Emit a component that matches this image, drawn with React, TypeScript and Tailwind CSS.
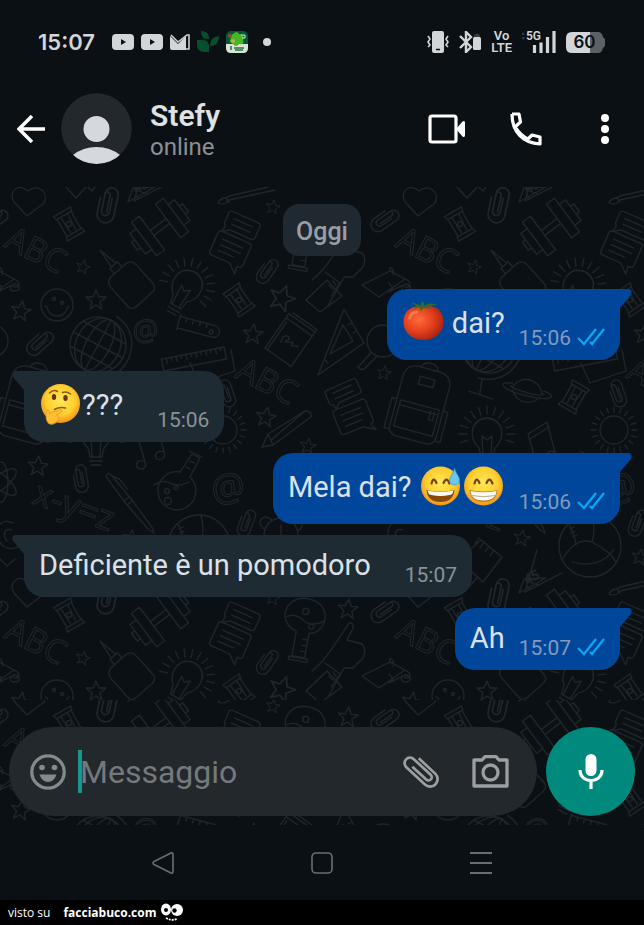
import React from 'react';

const TILE = 391;

type Spot = { x: number; y: number; r?: number; s?: number };

const stars: Spot[] = [
  { x: 273, y: 207, r: 10, s: 0.7 },
  { x: 83, y: 267, r: 15, s: 0.7 },
  { x: 96, y: 300, r: 0, s: 1 },
  { x: 21, y: 311, r: 10, s: 1 },
  { x: 282, y: 298, r: 20, s: 1.3 },
  { x: 253, y: 334, r: 5, s: 1 },
  { x: 384, y: 373, r: 10, s: 0.7 },
  { x: 266, y: 417, r: 10, s: 1 },
  { x: 308, y: 446, r: 10, s: 0.8 },
  { x: 38, y: 466, r: 5, s: 1 },
  { x: 131, y: 538, r: 10, s: 0.8 },
  { x: 249, y: 557, r: 10, s: 0.8 },
  { x: 348, y: 218, r: 5, s: 1 },
];

const clips: Spot[] = [
  { x: 107, y: 204, r: 12, s: 1.3 },
  { x: 267, y: 270, r: 35, s: 1 },
  { x: 385, y: 219, r: 55, s: 1.1 },
  { x: 40, y: 342, r: 48, s: 1.1 },
  { x: 226, y: 393, r: -20, s: 1 },
  { x: 80, y: 478, r: -10, s: 1 },
  { x: 246, y: 522, r: 20, s: 1 },
];

const sharpeners: Spot[] = [
  { x: 69, y: 224, r: -30 },
  { x: 239, y: 300, r: -35 },
  { x: 183, y: 397, r: 30 },
];

const bulbs: Spot[] = [
  { x: 187, y: 286, r: 30 },
  { x: 96, y: 434, r: 0 },
];

const place = (p: Spot) => `translate(${p.x} ${p.y}) rotate(${p.r ?? 0}) scale(${p.s ?? 1})`;

const rays = Array.from({ length: 20 }, (_, i) => i * 18);

const Doodles: React.FC = () => (
  <g fill="none" stroke="#1f2529" strokeWidth={1.3} strokeLinejoin="round" strokeLinecap="round">
    {stars.map((p) => (
      <path key={`${p.x}-${p.y}`} transform={place(p)} d="M0-10L3-3 10-3 4 2 6 9 0 5-6 9-4 2-10-3-3-3Z" />
    ))}
    {clips.map((p) => (
      <path key={`${p.x}-${p.y}`} transform={place(p)} d="M3-5V6a3 3 0 01-6 0V-8a5 5 0 0110 0V8a6 6 0 01-13 0V-4M-3-2V-7a2 2 0 014 0V6" />
    ))}
    {sharpeners.map((p) => (
      <g key={`${p.x}-${p.y}`} transform={place(p)}>
        <path d="M-10-14H10L8-8V8L10 14H-10L-8 8V-8ZM-9-10H9M-9 10H9M-4-9L-3 8M4-9L3 8" />
        <circle r={2.5} />
      </g>
    ))}
    {bulbs.map((p) => (
      <g key={`${p.x}-${p.y}`} transform={place(p)}>
        <path d="M-6 23L-8 14C-18 5-18-14 0-16 18-14 18 5 8 14L6 23ZM-6 27H6M-5 31H5M-4 23L-5 2 0 6 5 2 4 23" />
        {rays.slice(0, 13).map((a) => (
          <path key={a} d="M0-20V-28" transform={`rotate(${a - 108})`} />
        ))}
      </g>
    ))}

    <path d="M27 216L14 202C8 192 18 182 28 191 39 183 49 193 44 203Z" />
    <path d="M66 187L76 198 86 187M128 202L133 188 155 187 128 202M136 195L139 198" />
    <path d="M218 203C220 197 226 199 229 196L268 187M229 200L275 190M226 198L229 202M218 203C223 205 227 203 229 200" />

    <g transform="translate(160 227) rotate(-37)">
      <path d="M-10-3H10M-10 3H10M-20-21H-10V21H-20ZM10-21H20V21H10ZM-28-13H-20V13H-28ZM20-13H28V13H20ZM-32-5H-28V5H-32ZM28-5H32V5H28Z" />
    </g>

    <g transform="translate(241 225) rotate(24)">
      <path d="M-13-9H15Q18-9 18-6V6Q18 9 15 9H-8L-15 14-14 7Q-16 6-16 4V-6Q-16-9-13-9ZM-9-3H11M-9 3H11" />
    </g>
    <g transform="translate(230 250) rotate(24)">
      <path d="M-15-14H15Q18-14 18-11V9Q18 12 15 12H13L14 20 5 12H-15Q-18 12-18 9V-11Q-18-14-15-14ZM-11-7H11M-11-1H11M-11 5H6" />
    </g>
    <g transform="translate(343 392) rotate(-24)">
      <path d="M-15-8H14Q17-8 17-5V5Q17 8 14 8H-8L-13 13-14 8Q-17 7-17 5V-5Q-17-8-15-8ZM-10-3H10M-10 3H10" />
    </g>
    <g transform="translate(353 418) rotate(-22)">
      <path d="M-14-14H15Q18-14 18-11V9Q18 12 15 12H14L17 19 6 12H-14Q-17 12-17 9V-11Q-17-14-14-14ZM-10-7H11M-10-1H11M-10 5H8" />
    </g>

    <g fontFamily="'Open Sans', sans-serif" fontSize={33} strokeWidth={1}>
      <text transform="translate(3 246) rotate(27)">ABC</text>
      <text transform="translate(234 377) rotate(27)">ABC</text>
      <text transform="translate(134 342) rotate(-8)" fontSize={29}>@</text>
      <text transform="translate(214 504) rotate(-12)" fontSize={38}>@</text>
      <text transform="translate(31 503) rotate(20)" fontSize={35}>x-y=z</text>
      <text transform="translate(136 584) rotate(-25)" fontSize={13}>45</text>
    </g>

    <g transform="translate(127 280) rotate(-42)">
      <path d="M-10-13H10Q17-12 17-5V20Q17 26 10 26H-10Q-17 26-17 20V-5Q-17-12-10-13ZM-5-13V-20H5V-13M-3-20L0-40 3-20" />
    </g>

    <g transform="translate(302 236) rotate(10)">
      <path d="M-5 5V30H8V5M-8 31H11V34H-8ZM-5 5C-18 2-23-12-15-22-7-32 13-31 19-20 25-10 19 3 8 5M-18-7Q-9-13 0-7T21-10M3 12H8M3 18H8M3 24H8" />
      <circle cx={1} cy={-16} r={3} />
      <circle cx={9} cy={-2} r={2.5} />
    </g>
    <g transform="translate(172 489)">
      <path d="M8-17L20-35 28-31 18-12M17-38L30-32M18-28L22-26M14-22L18-20M-18-4Q-10-10-2-6T17-7" />
      <path d="M8-17A19 19 0 1018-12" />
      <circle cx={-5} cy={2} r={2.5} />
      <circle cx={4} cy={-1} r={2} />
      <circle cx={-4} cy={12} r={3.5} />
    </g>

    <path d="M-2 283L2 288-2 292M0 291L14 284M14 284C21 285 21 291 15 291 9 291 9 286 14 284" />
    <circle cx={57} cy={305} r={16} />
    <path d="M47 307C49 319 65 319 67 308M47 307L45 306M67 308L69 306" />
    <circle cx={54} cy={299} r={1.5} />
    <circle cx={62} cy={303} r={1.5} />

    <g transform="translate(98 345) rotate(28)">
      <circle r={28} />
      <ellipse rx={12} ry={28} />
      <ellipse rx={22} ry={28} />
      <path d="M0-28V28M-28 0H28M-24-14H24M-24 14H24M3-34C42-30 44 26 6 34M10 34L15 48M4 50L28 46" />
    </g>

    <g transform="translate(197 327) rotate(15)">
      <path d="M-19-6H17A6 6 0 0117 6H-19ZM-19-8V8M-12-6V-2M-5-6V-2M2-6V-2M9-6V-2" />
      <circle cx={15} cy={1} r={2} />
    </g>
    <g transform="translate(194 359) rotate(-11)">
      <path d="M-32-6H32V6H-32ZM-27-6V-1M-22-6V-3M-17-6V-1M-12-6V-3M-7-6V-1M-2-6V-3M3-6V-1M8-6V-3M13-6V-1M18-6V-3M23-6V-1M28-6V-3" />
    </g>

    <g transform="translate(290 340) rotate(35)">
      <path d="M-16-21H16V21H-16ZM-16-16H16M-13-24H16V-21M-13-13V21M-6 7C-12-2 2-5-2 2-6 9 6-4 4 2 2 8 12-3 10 2" />
    </g>
    <path d="M306 300L327 280 342 296 320 312ZM362 285L390 271 405 279 379 297ZM390 271C388 264 395 269 393 275M405 279C413 282 410 290 404 286" />
    <path d="M312 280C325 270 331 258 336 252L349 232C354 231 354 236 352 239L347 249 362 253Q367 258 363 267L353 277H344L328 306M325 272L340 283 331 296M333 281L336 285M329 285L333 289" />
    <path d="M344 309L364 343 318 375ZM343 325L353 341 330 354ZM352 323L348 325M357 331L353 333M325 360L328 363" />
    <circle cx={383} cy={341} r={16} />
    <path d="M371 353L358 367Q362 372 366 367L377 356" />

    <g transform="translate(29 405) rotate(15)">
      <path d="M-24-26Q-22-36-12-37H12Q22-36 24-26V27Q24 34 17 36H-17Q-24 34-24 27ZM-9-37Q-7-43 0-43T9-37M-7-28H8V-20H-7ZM-20 0H20V27H-20ZM-20 5H20M12 3V12H16V3M-25 0H-29V31H-24M25 0H29V31H24" />
    </g>
    <g transform="translate(137 387) rotate(14)">
      <path d="M-15 3A16 16 0 0115 3M-14 7A16 16 0 0014 7M-16 0C-33 2-25 9 0 9S33 2 16 0M-17 3C-18 6 16 7 17 3" />
    </g>
    <circle cx={223} cy={430} r={14} />
    {rays.map((a) => (
      <path key={a} d="M223 412V407" transform={`rotate(${a} 223 430)`} />
    ))}
    <path d="M145 462L137 434 156 422 164 452M139 439L158 427M145 462C139 458 134 464 138 468 143 471 147 467 145 462M164 452C158 449 153 455 157 459 162 461 166 457 164 452" />
    <path d="M262 447L268 434 305 411Q312 411 311 417L273 445ZM268 434L273 445M304 412L271 440M190 363L199 383 235 371 231 350" />

    <ellipse cx={1} cy={482} rx={19} ry={7} transform="rotate(40 1 482)" />
    <ellipse cx={1} cy={482} rx={19} ry={7} transform="rotate(-40 1 482)" />
    <ellipse cx={1} cy={482} rx={7} ry={20} />
    <g transform="translate(130 504) rotate(-38)">
      <path d="M-2-36Q1-39 3-36L4-3 3 32 1 38-1 32-3-3ZM-3-6H4M-3-1H4M4-32L7-26V-14" />
    </g>
    <circle cx={199} cy={546} r={31} />
    <path d="M201 515C204 527 203 536 201 542M201 542C188 538 180 546 172 558M201 542C214 549 222 556 225 562M178 524C182 532 184 538 185 545M181 562C198 567 214 563 223 549M179 529L183 527M180 533L184 531M182 537L186 535" />
    <circle cx={281} cy={535} r={17} />
    <path d="M265 530C254 522 264 512 272 520M281 535V525M281 535L289 538M291 520C301 514 307 524 298 531" />
    <path d="M13 523C0 517-8 530 1 544 8 553 25 548 25 536M12 530C5 527 2 535 7 541M-4 555L7 566 15 559" />
    <path d="M134 592L146 550M134 592L171 573M138 582L148 585" />
    <path d="M68 560L90 540 111 557 92 582ZM88 538L84 544M93 542L89 548M98 546L94 552M103 550L99 556" />
  </g>
);

const Wallpaper: React.FC<{ id: string; offset?: number }> = ({ id, offset = 0 }) => (
  <svg className="absolute inset-0 h-full w-full" aria-hidden="true">
    <defs>
      <pattern id={id} x={0} y={-offset} width={TILE} height={TILE} patternUnits="userSpaceOnUse">
        {[-TILE, 0, TILE].map((dx) =>
          [-TILE, 0, TILE].map((dy) => (
            <g key={`${dx}:${dy}`} transform={`translate(${dx} ${dy - 187})`}>
              <Doodles />
            </g>
          ))
        )}
      </pattern>
    </defs>
    <rect width="100%" height="100%" fill={`url(#${id})`} />
  </svg>
);

const emojiClass = 'inline-block h-[42px] w-[43px] align-[-10px]';

const Tomato: React.FC = () => (
  <svg className={emojiClass} viewBox="0 0 42 42" role="img" aria-label="🍅">
    <defs>
      <radialGradient id="tomato" cx="38%" cy="40%" r="65%">
        <stop offset="0" stopColor="#ff6c3c" />
        <stop offset="0.55" stopColor="#e4401c" />
        <stop offset="1" stopColor="#a92310" />
      </radialGradient>
    </defs>
    <path d="M21 6C9 3 1 11 1 21c0 11 9 18 20 18s20-7 20-18C41 10 33 3 21 6Z" fill="url(#tomato)" />
    <path d="M7 17Q9 11 14 11" fill="none" stroke="#ffab81" strokeWidth={3} strokeLinecap="round" opacity={0.45} />
    <path d="M8 1C13 2 16 4 18 5L19 1 21 1 22 5C26 2 30 2 34 4 30 4 27 5 25 6L29 8 21 7 18 10 17 6 11 8 14 5Z" fill="#3c6a20" />
  </svg>
);

const FaceGradient: React.FC<{ id: string }> = ({ id }) => (
  <defs>
    <radialGradient id={id} cx="50%" cy="42%" r="58%">
      <stop offset="0" stopColor="#ffe958" />
      <stop offset="0.65" stopColor="#ffcd2e" />
      <stop offset="1" stopColor="#ef9218" />
    </radialGradient>
  </defs>
);

const Thinking: React.FC = () => (
  <svg className={emojiClass} viewBox="0 0 42 42" role="img" aria-label="🤔">
    <FaceGradient id="face-thinking" />
    <circle cx={21} cy={20.5} r={19.5} fill="url(#face-thinking)" />
    <ellipse cx={14.5} cy={14} rx={2.2} ry={3} fill="#613611" />
    <ellipse cx={26} cy={15} rx={2.2} ry={3} fill="#613611" />
    <path d="M10 10Q14 6 18 8.5M23 9.500Q27 8 31 11M15 26.500Q20 23.500 26 25" fill="none" stroke="#8a5a12" strokeWidth={1.5} strokeLinecap="round" />
    <path d="M7.500 27Q10 26 10 31 13 28 17 28L21 26.500Q24 27 22 29L17 32Q21 34 18 38 14 43 9 40.500 5 36 7.500 27Z" fill="#ffbd34" stroke="#e39a22" strokeWidth={0.8} />
  </svg>
);

const Grin: React.FC<{ id: string; label: string; sweat?: boolean }> = ({ id, label, sweat }) => (
  <svg className={emojiClass} viewBox="0 0 42 42" role="img" aria-label={label}>
    <FaceGradient id={id} />
    <circle cx={21} cy={21} r={19.5} fill={`url(#${id})`} />
    <path d="M12 18.500Q14 11 17 18M24 18Q27 11 30 18.500" fill="none" stroke="#72430e" strokeWidth={2.2} strokeLinecap="round" />
    <path d="M7 25Q21 28 35 25 34 37 21 37T7 25Z" fill={sweat ? '#8a480a' : '#b8802a'} />
    <path
      d={sweat ? 'M8 25.500Q21 28 34 25.500 33 30 30 30 21 32 12 30 9 30 8 25.500Z' : 'M8 26Q21 28.500 34 26 33 35.500 21 35.500T8 26Z'}
      fill="#fbfaf2"
    />
    {!sweat && <path d="M9 30.500Q21 33 33 30.500" fill="none" stroke="#b9a995" strokeWidth={1} />}
    {sweat && <path d="M35 3C34 9 30 12 30 15.500c0 3 2 4.500 5 4.500s5-2 5-5c0-4-4-7-5-12Z" fill="#6cc6ee" stroke="#2991c7" strokeWidth={0.6} />}
  </svg>
);

const Ticks: React.FC = () => (
  <svg className="mb-1 h-[18px] w-7" viewBox="0 0 28 18" fill="none" stroke="#0ba5f4" strokeWidth={2.4} role="img" aria-label="Letto">
    <path d="M1 10L7 16 19 1M13 14L15 16 27 1" />
  </svg>
);

interface BubbleProps {
  time: string;
  out?: boolean;
  tall?: boolean;
  children: React.ReactNode;
}

const Bubble: React.FC<BubbleProps> = ({ time, out, tall, children }) => (
  <li
    className={
      out
        ? 'relative flex items-end gap-[14px] self-end rounded-[20px] rounded-tr-none bg-[#00479b] px-[15px] pt-2 pb-[10px]'
        : 'relative flex items-end gap-[34px] self-start rounded-[20px] rounded-tl-none bg-[#1f2b33] px-[15px] pt-2 pb-[10px]'
    }
  >
    <svg
      className={out ? 'absolute top-0 -right-3 h-[19px] w-[13px]' : 'absolute top-0 -left-3 h-[19px] w-[13px] -scale-x-100'}
      viewBox="0 0 13 19"
      fill={out ? '#00479b' : '#1f2b33'}
      aria-hidden="true"
    >
      <path d="M0 0H10Q14 1 12 6L1 19H0Z" />
    </svg>
    <p className={tall ? 'text-[29px] leading-[53px] whitespace-nowrap text-[#dbe1e8]' : 'text-[29px] leading-[44px] text-[#dbe1e8]'}>
      {children}
    </p>
    <div className="flex items-end gap-[6px]">
      <time className={out ? 'text-[21px] leading-6 text-[#8599bd]' : 'text-[21px] leading-6 text-[#8a9298]'}>{time}</time>
      {out && <Ticks />}
    </div>
  </li>
);

const YoutubeIcon: React.FC = () => (
  <svg className="h-4 w-[22px]" viewBox="0 0 22 16" aria-hidden="true">
    <rect width={22} height={16} rx={4} fill="#d3d6d8" />
    <path d="M9 5L14 8 9 11Z" fill="#0b1014" />
  </svg>
);

const StatusBar: React.FC = () => (
  <div className="flex h-[84px] items-center justify-between pr-[39px] pl-[38px] text-[#d3d6d8]">
    <div className="flex items-center gap-[7px]">
      <span className="mr-[10px] font-[Inter,sans-serif] text-[22px] leading-7 font-semibold">15:07</span>
      <YoutubeIcon />
      <YoutubeIcon />
      <svg className="h-4 w-5" viewBox="0 0 20 16" aria-hidden="true">
        <path d="M0 2L8 10 16 2V16H2Q0 16 0 14Z" fill="#d3d6d8" />
        <path d="M1 1L8 8 17 1H19V15H16" fill="none" stroke="#d3d6d8" strokeWidth={1.5} />
      </svg>
      <svg className="h-[22px] w-[22px]" viewBox="0 0 22 22" fill="#07502f" aria-hidden="true">
        <path d="M4 0Q12 0 12 8 4 9 4 0ZM22 5Q22 15 13 15 13 6 22 5ZM0 9H7Q11 10 12 14V21H7Q0 20 0 14Z" />
      </svg>
      <svg className="h-[22px] w-[22px]" viewBox="0 0 22 22" aria-hidden="true">
        <rect width={22} height={22} rx={5} fill="#05573a" />
        <path d="M0 13H22V17Q22 22 17 22H5Q0 22 0 17Z" fill="#d9e2d4" />
        <path d="M7 3Q11-1 13 3 19 3 17 9 19 14 13 13 10 17 7 13 2 11 5 7 4 4 7 3Z" fill="#47b528" />
        <circle cx={4} cy={5} r={2} fill="#a54327" />
        <circle cx={7} cy={10} r={2} fill="#b6b92b" />
        <path d="M15 4H19V7H16" fill="none" stroke="#dce5db" strokeWidth={1} />
        <path d="M5 15V19M8 17H18M9 19H17" stroke="#287045" strokeWidth={1.5} />
      </svg>
      <span className="ml-2 h-2 w-2 rounded-full bg-[#d3d6d8]" />
    </div>
    <div className="flex items-center gap-[10px]">
      <svg className="h-[22px] w-[22px]" viewBox="0 0 22 22" aria-hidden="true">
        <rect x={5} width={12} height={22} rx={2} fill="#d3d6d8" />
        <path d="M9 18.500H13" stroke="#0b1014" strokeWidth={1.5} />
        <path d="M1 5L3 8 1 11 3 14 1 16M21 5L19 8 21 11 19 14 21 16" fill="none" stroke="#d3d6d8" strokeWidth={1.6} />
      </svg>
      <svg className="h-[22px] w-[22px]" viewBox="0 0 22 22" aria-hidden="true">
        <path d="M1 5L12 16 7 21V1L12 6 1 17" fill="none" stroke="#d3d6d8" strokeWidth={2.4} />
        <path d="M15 6V4Q18 1 21 4V6Z" fill="#343a3e" />
        <rect x={14} y={6} width={8} height={13} rx={1.5} fill="#d3d6d8" />
      </svg>
      <span className="flex flex-col items-center text-[13px] leading-3 font-semibold">
        <span>Vo</span>
        <span>LTE</span>
      </span>
      <span className="relative h-[22px] w-[34px]">
        <span className="absolute -top-px left-[4px] text-[12px] leading-3 font-semibold">5G</span>
        <svg className="h-[22px] w-[34px]" viewBox="0 0 34 22" aria-hidden="true">
          <path d="M-1 4L1 1 3 4ZM-1 6H3L1 9Z" fill="#343a3e" />
          <path d="M12.500 22V14M19 22V11.500M25.500 22V6M32 22V0" stroke="#d3d6d8" strokeWidth={3.200} />
        </svg>
      </span>
      <span className="relative flex h-[21px] w-[39px] items-center justify-center pr-[2px] font-[Inter,sans-serif] text-[17px] leading-5 font-semibold text-[#0b1014]">
        <svg className="absolute inset-0 h-full w-full" viewBox="0 0 39 21" aria-hidden="true">
          <path d="M24 0H32Q36 0 37 5L39 7V14L37 16Q36 21 32 21H24Z" fill="#5c6164" />
          <path d="M6 0H24V21H6Q0 21 0 15V6Q0 0 6 0Z" fill="#d3d6d8" />
        </svg>
        <span className="relative">60</span>
      </span>
    </div>
  </div>
);

const ChatHeader: React.FC = () => (
  <header className="flex h-[103px] items-start pr-[35px] pl-[17px] text-white">
    <button type="button" aria-label="Indietro" className="mt-[31px]">
      <svg className="h-7 w-7" viewBox="0 0 28 28" fill="none" stroke="currentColor" strokeWidth={3.5}>
        <path d="M28 14H3M15 1L2 14 15 27" />
      </svg>
    </button>
    <svg className="mt-[9px] ml-4 h-[71px] w-[71px]" viewBox="0 0 71 71" role="img" aria-label="Stefy">
      <defs>
        <clipPath id="avatar">
          <circle cx={35.5} cy={35.5} r={35.5} />
        </clipPath>
      </defs>
      <g clipPath="url(#avatar)">
        <circle cx={35.5} cy={35.5} r={35.5} fill="#23282c" />
        <circle cx={35.5} cy={36} r={13} fill="#d5d8dc" />
        <path d="M12 62Q22 54 35.500 54T59 62V71H12Z" fill="#d5d8dc" />
      </g>
    </svg>
    <div className="mt-[14px] ml-[18px] flex-1">
      <h1 className="text-[30px] leading-9 font-semibold text-[#dfe1e3]">Stefy</h1>
      <p className="text-[24px] leading-[26px] text-[#8c9195]">online</p>
    </div>
    <div className="mt-[28px] flex items-center gap-[44px]">
      <button type="button" aria-label="Videochiamata">
        <svg className="h-[34px] w-[37px]" viewBox="0 0 37 34">
          <rect x={2} y={4} width={26} height={26} rx={2} fill="none" stroke="currentColor" strokeWidth={3.2} />
          <path d="M28 17L34.500 9.500Q37 8 37 11V23Q37 26 34.500 24.500Z" fill="currentColor" />
        </svg>
      </button>
      <button type="button" aria-label="Chiama">
        <svg className="h-[34px] w-[34px]" viewBox="0 0 34 34" fill="none" stroke="currentColor" strokeWidth={3.2} strokeLinejoin="round">
          <path d="M3 2H10L11.500 10 6 15M19 27L23 23 31 25V32C14 31 3 20 3 2M6 15C10 21 14 25 19 27" />
        </svg>
      </button>
      <button type="button" aria-label="Altre opzioni" className="ml-[14px] flex h-[34px] w-[8px] flex-col items-center justify-center gap-[3px]">
        <span className="h-2 w-2 shrink-0 rounded-full bg-white" />
        <span className="h-2 w-2 shrink-0 rounded-full bg-white" />
        <span className="h-2 w-2 shrink-0 rounded-full bg-white" />
      </button>
    </div>
  </header>
);

const Composer: React.FC = () => (
  <form className="relative px-[9px] pt-[27px] pb-[9px]">
    <Wallpaper id="wallpaper-composer" offset={14} />
    <div className="relative flex items-center gap-[9px]">
      <div className="flex h-[89px] min-w-0 flex-1 items-center rounded-full bg-[#23282c] pr-7 pl-[21px] text-[#9b9fa2]">
        <button type="button" aria-label="Emoji" className="text-[#858a8d]">
          <svg className="h-9 w-9" viewBox="0 0 36 36" fill="currentColor">
            <circle cx={18} cy={18} r={16.2} fill="none" stroke="currentColor" strokeWidth={3.3} />
            <circle cx={12} cy={13.5} r={2.8} />
            <circle cx={24.5} cy={13.5} r={2.8} />
            <path d="M9.500 20.500H26.500Q24 28 18 28T9.500 20.500Z" />
          </svg>
        </button>
        <span className="ml-3 h-[43px] w-1 shrink-0 bg-[#16998a]" />
        <input
          type="text"
          aria-label="Messaggio"
          placeholder="Messaggio"
          className="-ml-[2px] h-12 min-w-0 flex-1 bg-transparent text-[32px] text-[#dbe1e8] outline-none placeholder:text-[#74797d]"
        />
        <button type="button" aria-label="Allega">
          <svg className="h-9 w-9" viewBox="0 0 36 36" fill="none" stroke="currentColor" strokeWidth={2.7}>
            <path
              transform="translate(18 18) rotate(43)"
              d="M-11-8.500H11.500A7.500 7.500 0 0 1 11.500 6.500H-14A5.500 5.500 0 0 1-14-4.500H9A3.200 3.200 0 0 1 9 2H-10"
            />
          </svg>
        </button>
        <button type="button" aria-label="Fotocamera" className="ml-[33px]">
          <svg className="h-[34px] w-[37px]" viewBox="0 0 37 34" fill="none" stroke="currentColor" strokeWidth={3.3} strokeLinejoin="round">
            <path d="M2 5H10L13 1.700H24L27 5H35V31H2Z" />
            <circle cx={18.5} cy={17.5} r={7.5} />
          </svg>
        </button>
      </div>
      <button type="button" aria-label="Messaggio vocale" className="flex h-[89px] w-[89px] items-center justify-center rounded-full bg-[#00897d] text-white">
        <svg className="h-[35px] w-[26px]" viewBox="0 0 26 35">
          <rect x={7.5} width={11} height={22} rx={5.5} fill="currentColor" />
          <path d="M2 16C2 30 24 30 24 16M13 27V35" fill="none" stroke="currentColor" strokeWidth={3.2} />
        </svg>
      </button>
    </div>
  </form>
);

const NavBar: React.FC = () => (
  <nav className="flex h-[75px] items-center justify-center gap-[137px] text-[#696e71]">
    <button type="button" aria-label="Indietro">
      <svg className="h-[22px] w-[22px]" viewBox="0 0 22 22" fill="none" stroke="currentColor" strokeWidth={1.6} strokeLinejoin="round">
        <path d="M1 11Q1 10 2 9.500L19 1Q21 0 21 3V19Q21 22 19 21L2 12.500Q1 12 1 11Z" />
      </svg>
    </button>
    <button type="button" aria-label="Home">
      <svg className="h-[22px] w-[22px]" viewBox="0 0 22 22" fill="none" stroke="currentColor" strokeWidth={1.6}>
        <rect x={1} y={1} width={20} height={20} rx={4} />
      </svg>
    </button>
    <button type="button" aria-label="Recenti">
      <svg className="h-[22px] w-[22px]" viewBox="0 0 22 22" stroke="currentColor" strokeWidth={1.8}>
        <path d="M0 1H22M0 11H22M0 21H22" />
      </svg>
    </button>
  </nav>
);

const App: React.FC = () => {
  return (
    <div className="flex min-h-screen flex-col bg-[#0b1014] font-[Roboto,sans-serif]">
      <StatusBar />
      <ChatHeader />
      <main className="relative flex-1 pt-[17px] pr-6 pb-[30px] pl-6">
        <Wallpaper id="wallpaper-chat" />
        <div className="relative flex flex-col items-center">
          <span className="rounded-2xl bg-[#20292f] px-[13px] pt-3 pb-2 text-[25px] leading-8 font-medium text-[#989fa4]">Oggi</span>
          <ul className="mt-[33px] flex w-full flex-col gap-[11px]">
            <Bubble time="15:06" out tall>
              <Tomato /> dai?
            </Bubble>
            <Bubble time="15:06" tall>
              <Thinking />
              ???
            </Bubble>
            <Bubble time="15:06" out tall>
              Mela dai? <Grin id="face-sweat" label="😅" sweat />
              <Grin id="face-grin" label="😁" />
            </Bubble>
            <Bubble time="15:07">Deficiente è un pomodoro</Bubble>
            <Bubble time="15:07" out>
              Ah
            </Bubble>
          </ul>
        </div>
      </main>
      <Composer />
      <NavBar />
      <footer className="flex h-[25px] items-center bg-black px-2 font-['Open_Sans',sans-serif] text-[12px] leading-5 text-white">
        <span>visto su</span>
        <a href="#" className="ml-[13px] flex items-center gap-1 font-bold">
          facciabuco.com
          <svg className="h-5 w-6" viewBox="0 0 24 20" aria-hidden="true">
            <ellipse cx={6} cy={6.5} rx={5} ry={6} fill="#fff" />
            <ellipse cx={17} cy={7} rx={6} ry={6} fill="#fff" />
            <circle cx={6} cy={7} r={2} />
            <circle cx={14.5} cy={7.5} r={2.2} />
            <path d="M6 15Q11 18 17 16" fill="none" stroke="#fff" strokeWidth={1.8} strokeDasharray="2 1" />
          </svg>
        </a>
      </footer>
    </div>
  );
};

export default App;
